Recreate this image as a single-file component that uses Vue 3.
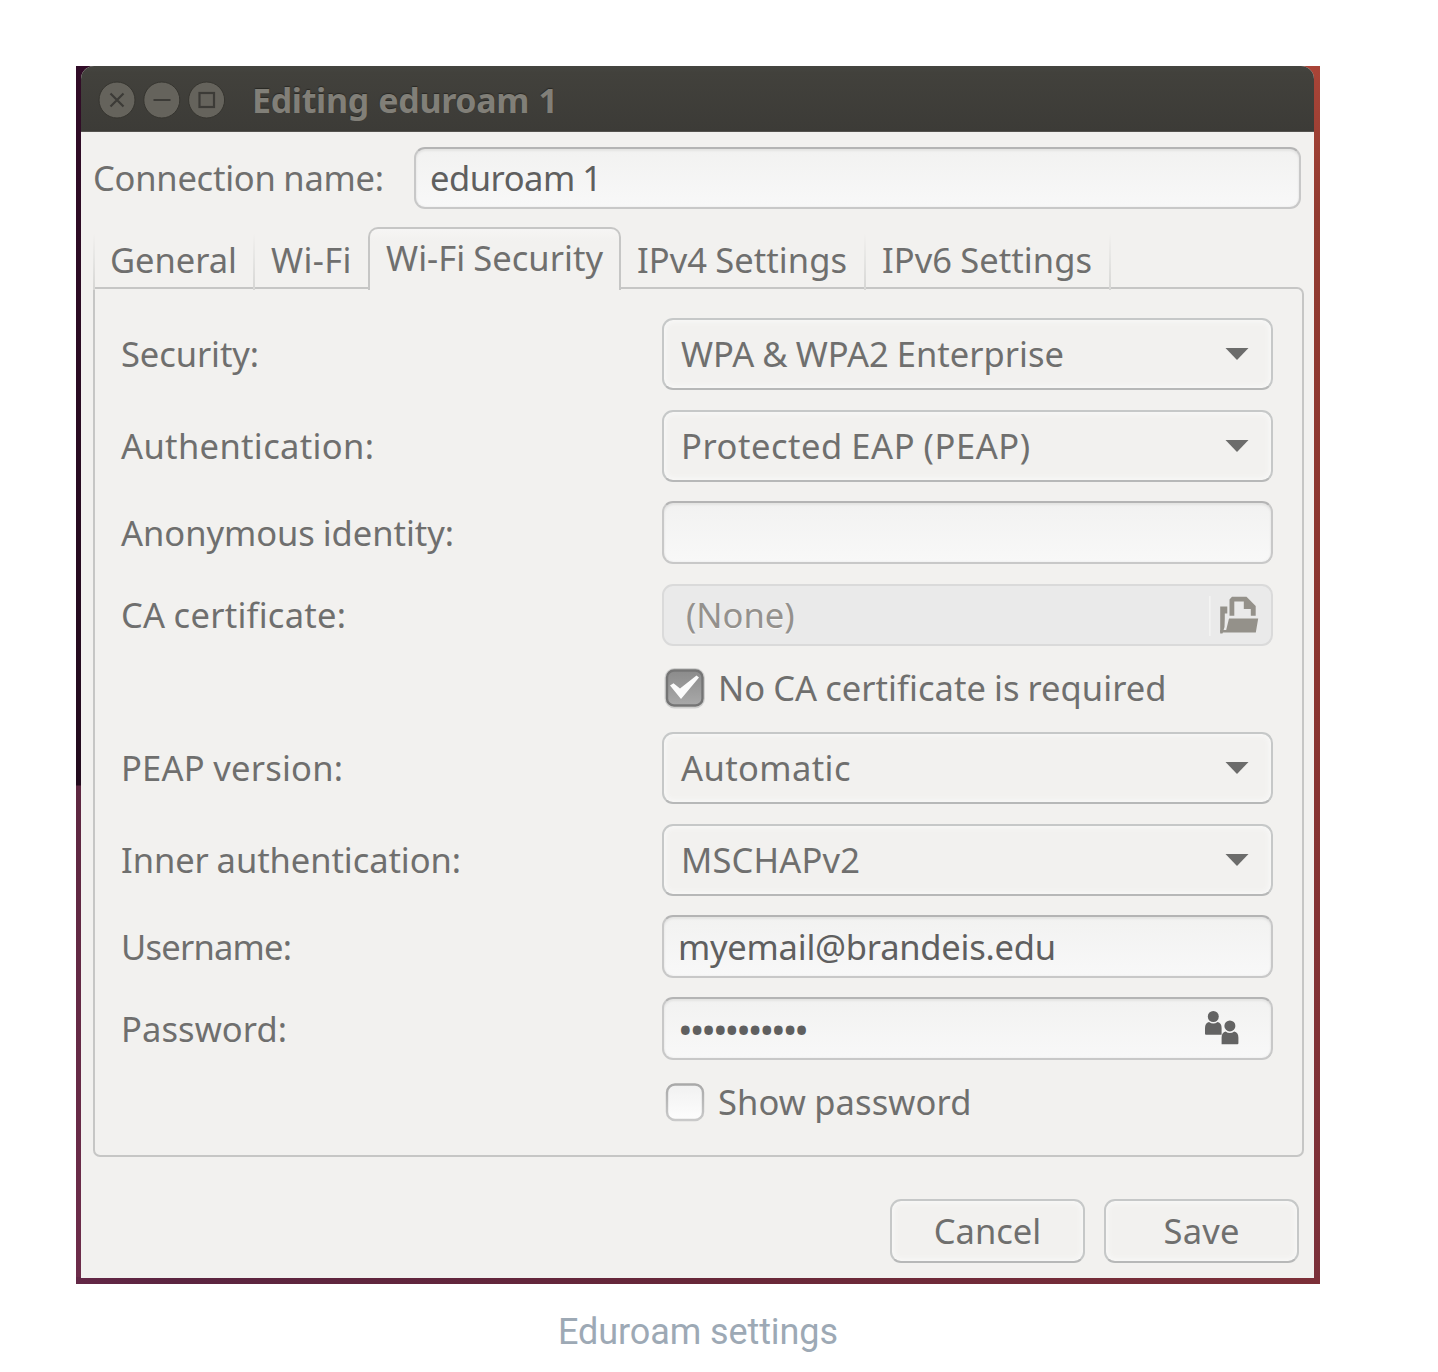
<script setup>
// Text run tracked out so that it spans a given width.
const vSpan = {
  mounted(el, { value }) {
    const count = el.textContent.length
    const extra = (value - el.getBoundingClientRect().width) / (count - 1)
    el.style.letterSpacing = `${extra.toFixed(3)}px`
    el.style.marginRight = `${(-extra).toFixed(3)}px`
  },
}

const tabs = [
  { name: 'General', span: 127, cls: 'general' },
  { name: 'Wi-Fi', span: 80.5, cls: 'wifi' },
  { name: 'Wi-Fi Security', span: 217, cls: 'active' },
  { name: 'IPv4 Settings', span: 210, cls: 'ipv4' },
  { name: 'IPv6 Settings', span: 210, cls: 'ipv6' },
]

const rows = [
  { label: 'Security:', ls: 138, kind: 'combo', value: 'WPA & WPA2 Enterprise', vs: 383 },
  { label: 'Authentication:', ls: 253, kind: 'combo', value: 'Protected EAP (PEAP)', vs: 349 },
  { label: 'Anonymous identity:', ls: 333, kind: 'entry', value: '' },
  { label: 'CA certificate:', ls: 225, kind: 'file', value: '(None)', vs: 108.5 },
  { kind: 'check', checked: true, value: 'No CA certificate is required', vs: 448.5 },
  { label: 'PEAP version:', ls: 222, kind: 'combo', value: 'Automatic', vs: 169.5 },
  { label: 'Inner authentication:', ls: 340, kind: 'combo', value: 'MSCHAPv2', vs: 179 },
  { label: 'Username:', ls: 171, kind: 'entry', value: 'myemail@brandeis.edu', vs: 378 },
  { label: 'Password:', ls: 166, kind: 'entry', value: '•••••••••••', vs: 131, password: true },
  { kind: 'check', checked: false, value: 'Show password', vs: 253.5 },
]
</script>

<template>
  <figure class="figure">
    <div class="desktop">
      <section class="window">
        <header class="titlebar">
          <svg class="wm" viewBox="0 0 126 36" width="126" height="36">
            <g fill="#65635c" stroke="#35342f" stroke-width="1">
              <circle cx="18" cy="18" r="18" /><circle cx="62.8" cy="18" r="18" /><circle cx="107.6" cy="18" r="18" />
            </g>
            <g fill="none" stroke="#3c3b37" stroke-width="2.2">
              <path d="M11.500 11.500l13 13M24.500 11.500l-13 13M54.500 18h17" />
              <rect x="100.500" y="11" width="14.500" height="14" />
            </g>
          </svg>
          <span class="title" v-span="306">Editing eduroam 1</span>
        </header>

        <div class="connection">
          <label class="text name" v-span="291">Connection name:</label>
          <div class="entry wide"><span class="text" v-span="172">eduroam 1</span></div>
        </div>

        <nav class="tabs">
          <div v-for="t in tabs" :key="t.name" class="tab" :class="t.cls">
            <span class="text" v-span="t.span">{{ t.name }}</span>
          </div>
        </nav>

        <div class="panel">
          <template v-for="(r, i) in rows" :key="i">
            <div class="cell label" :class="r.kind">
              <span v-if="r.label" class="text" v-span="r.ls">{{ r.label }}</span>
            </div>
            <div class="cell control" :class="[r.kind, { password: r.password }]">
              <svg v-if="r.kind === 'check'" class="box" width="42" height="42" viewBox="0 0 42 42">
                <defs>
                  <linearGradient id="on" x1="0" y1="0" x2="0" y2="1">
                    <stop offset="0" stop-color="#8b8b8b" /><stop offset="1" stop-color="#a9a9a9" />
                  </linearGradient>
                  <linearGradient id="off" x1="0" y1="0" x2="0" y2="1">
                    <stop offset="0" stop-color="#f1f1f1" /><stop offset="1" stop-color="#fdfdfd" />
                  </linearGradient>
                  <linearGradient id="rim" x1="0" y1="0" x2="0" y2="1">
                    <stop offset="0" stop-color="#a9a9a9" /><stop offset="1" stop-color="#c9c9c9" />
                  </linearGradient>
                </defs>
                <template v-if="r.checked">
                  <rect x="1.500" y="2" width="38.500" height="38.500" rx="9" fill="none" stroke="#d0d0cf" stroke-width="2" />
                  <rect x="3" y="3.500" width="35.500" height="35" rx="7" fill="url(#on)" stroke="#757575" stroke-width="2.400" />
                  <path d="M6 18.500l3.500-2.200 6.500 5.200L32.500 8.500l2.500 2L17 32z" fill="#fbfbfb" />
                </template>
                <rect v-else x="3" y="3.500" width="36" height="35.500" rx="8" fill="url(#off)" stroke="url(#rim)" stroke-width="2.400" />
              </svg>
              <span v-if="r.value" class="text" v-span="r.vs">{{ r.value }}</span>
              <svg v-if="r.kind === 'combo'" class="arrow" width="24" height="12" viewBox="0 0 24 12">
                <path d="M.5 0h23L12 12z" fill="#6c6c6b" />
              </svg>
              <svg v-if="r.kind === 'file'" class="open" width="52" height="42" viewBox="0 0 52 42">
                <path d="M.8 2v40" stroke="#f4f4f3" stroke-width="1.600" />
                <g fill="#94918a">
                  <path d="M11.200 12.500h7.100v7h-2.500v5L15.500 33l-2 6.500h-2.300z" />
                  <path d="M20.500 21.800V5.500l2.500-2.700h14.500L46.700 12v9.800h-4.900V15h-7V7.500h-9.500v14.300z" />
                  <path d="M20 24.500H49.200l-2.400 14H11.200V36h6z" />
                </g>
              </svg>
              <svg v-if="r.password" class="people" width="34" height="34" viewBox="0 0 34 34">
                <g fill="#636363">
                  <circle cx="8.300" cy="5.500" r="5.500" />
                  <path d="M1 23.700q-1 0-1-1V17q0-5 4-6 4.300 3.200 8.600 0 4 1 4 6v6.700z" />
                  <circle cx="24.900" cy="14.900" r="5.500" />
                  <path d="M16.600 33.200v-6.700q0-5 4-6 4.300 3.200 8.600 0 4.200 1 4.200 6v5.700q0 1-1 1z" />
                </g>
              </svg>
            </div>
          </template>
        </div>

        <footer class="actions">
          <div class="button"><span class="text" v-span="107.5">Cancel</span></div>
          <div class="button"><span class="text" v-span="76">Save</span></div>
        </footer>
      </section>
    </div>
    <figcaption class="caption"><span v-span="280">Eduroam settings</span></figcaption>
  </figure>
</template>

<style>
body { margin: 0; background: #fff; }
</style>

<style scoped>
* { box-sizing: border-box; }
.figure { margin: 66px 0 0 76px; width: 1244px; height: 1306px; overflow: hidden; }
.desktop {
  height: 1218px;
  padding: 0 6px 6px 5px;
  background:
    linear-gradient(90deg, #632746, #5b2440 8%, #672739 50%, #7c2f38) 0 100% / 100% 7px no-repeat,
    linear-gradient(#a94437, #923b31 12%, #8b3530 50%, #7b303a) 100% 0 / 20px 100% no-repeat,
    linear-gradient(#310c27, #230b1e 719px, #5e2741 720px, #6d2c4a) 0 0 / 20px 100% no-repeat;
}
.window {
  height: 1212px;
  border-radius: 13px 13px 0 0;
  overflow: hidden;
  background: #f2f1ef;
}
.text {
  font: 34.5px/40px "Noto Sans", sans-serif;
  color: #6f6f6e;
  white-space: nowrap;
  word-spacing: -1px;
  flex: none;
}
.titlebar {
  height: 66px;
  display: flex;
  align-items: center;
  padding: 3px 0 0 18px;
  background: linear-gradient(#454540, #42413c 10%, #3c3b37);
  border-bottom: 1px solid #55534f;
}
.wm { flex: none; overflow: visible; }
.title {
  margin-left: 27px;
  font: bold 34px/40px "Noto Sans", sans-serif;
  color: #817f78;
  text-shadow: 0 -1px 1px #292824;
  white-space: nowrap;
  word-spacing: 1px;
}
.connection {
  height: 95px;
  display: flex;
  align-items: flex-start;
  padding: 15px 13px 0 12px;
}
.name { margin-top: 11px; }
.wide {
  margin-left: auto;
  width: 887px;
  height: 62px;
  display: flex;
  align-items: center;
  padding: 0 0 1px 14px;
}
.wide, .control.entry {
  border: 2px solid #c8c8c8;
  border-top-color: #b4b4b4;
  border-radius: 11px;
  background: linear-gradient(#f2f2f1, #f8f8f8);
  box-shadow: inset 0 2px 2px #e4e4e3, inset 0 0 2px #e2e2e2;
}
.wide .text, .control.entry .text { color: #5f5f5f; }
.tabs {
  height: 63px;
  display: flex;
  align-items: flex-end;
  padding-left: 12px;
  position: relative;
  z-index: 1;
}
.tab {
  height: 56px;
  padding: 0 0 5px 17px;
  display: flex;
  align-items: center;
  border-right: 2px solid;
  border-image: linear-gradient(#f2f1ef, #d6d6d4) 1;
}
.tab.general { width: 162px; border-left: 2px solid; padding-left: 15px; }
.tab.wifi { width: 113px; border-right: 0; padding-left: 16px; }
.tab.active {
  width: 253px;
  height: 63px;
  padding: 0 0 3px 16px;
  border: 2px solid #c6c6c5;
  border-bottom: 0;
  border-image: none;
  border-radius: 10px 10px 0 0;
  background: linear-gradient(#f6f5f4, #f2f1ef 12px);
}
.tab.ipv4, .tab.ipv6 { width: 245px; padding-left: 16px; }
.panel {
  width: 1211px;
  height: 870px;
  margin: -3px 0 0 12px;
  padding: 29px 0 0 26px;
  border: 2px solid #c6c6c5;
  border-radius: 0 7px 7px 7px;
  display: grid;
  grid-template-columns: 541px 611px;
  grid-template-rows: 92px 91px 83px 81px 67px 92px 91px 82px 82px 47px;
  align-items: start;
}
.cell { display: flex; align-items: center; height: 63px; }
.cell.combo { height: 72px; padding-bottom: 1px; }
.cell.file { height: 62px; }
.cell.check { height: 46px; }
.control.combo, .button {
  border: 2px solid #c6c8c8;
  border-bottom-color: #b7b8b8;
  border-radius: 11px;
  background: #f2f1ef;
  box-shadow: inset 0 0 5px 2px #f8f8f7;
}
.control.combo { padding: 0 22px 1px 17px; }
.control.entry { padding: 0 32px 0 14px; }
.control.file {
  padding: 0 10px 0 22px;
  border: 2px solid #dadada;
  border-radius: 11px;
  background: #eaeaea;
}
.control.file .text { color: #94918d; text-shadow: 0 1px 0 #fafafa; }
.control.check { padding-left: 2px; }
.control.check .text { margin-left: 12px; }
.arrow, .open, .people { margin-left: auto; flex: none; }
.box { flex: none; }
.people { margin-top: -2px; }
.control.password .text { font-size: 39px; }
.actions {
  display: flex;
  justify-content: flex-end;
  gap: 19px;
  padding: 42px 15px 0 0;
}
.button {
  width: 195px;
  height: 64px;
  display: flex;
  align-items: center;
  justify-content: center;
}
.caption {
  margin-top: 26px;
  text-align: center;
  font: 36px/44px Roboto, sans-serif;
  color: #9da9b5;
  white-space: nowrap;
}
</style>
